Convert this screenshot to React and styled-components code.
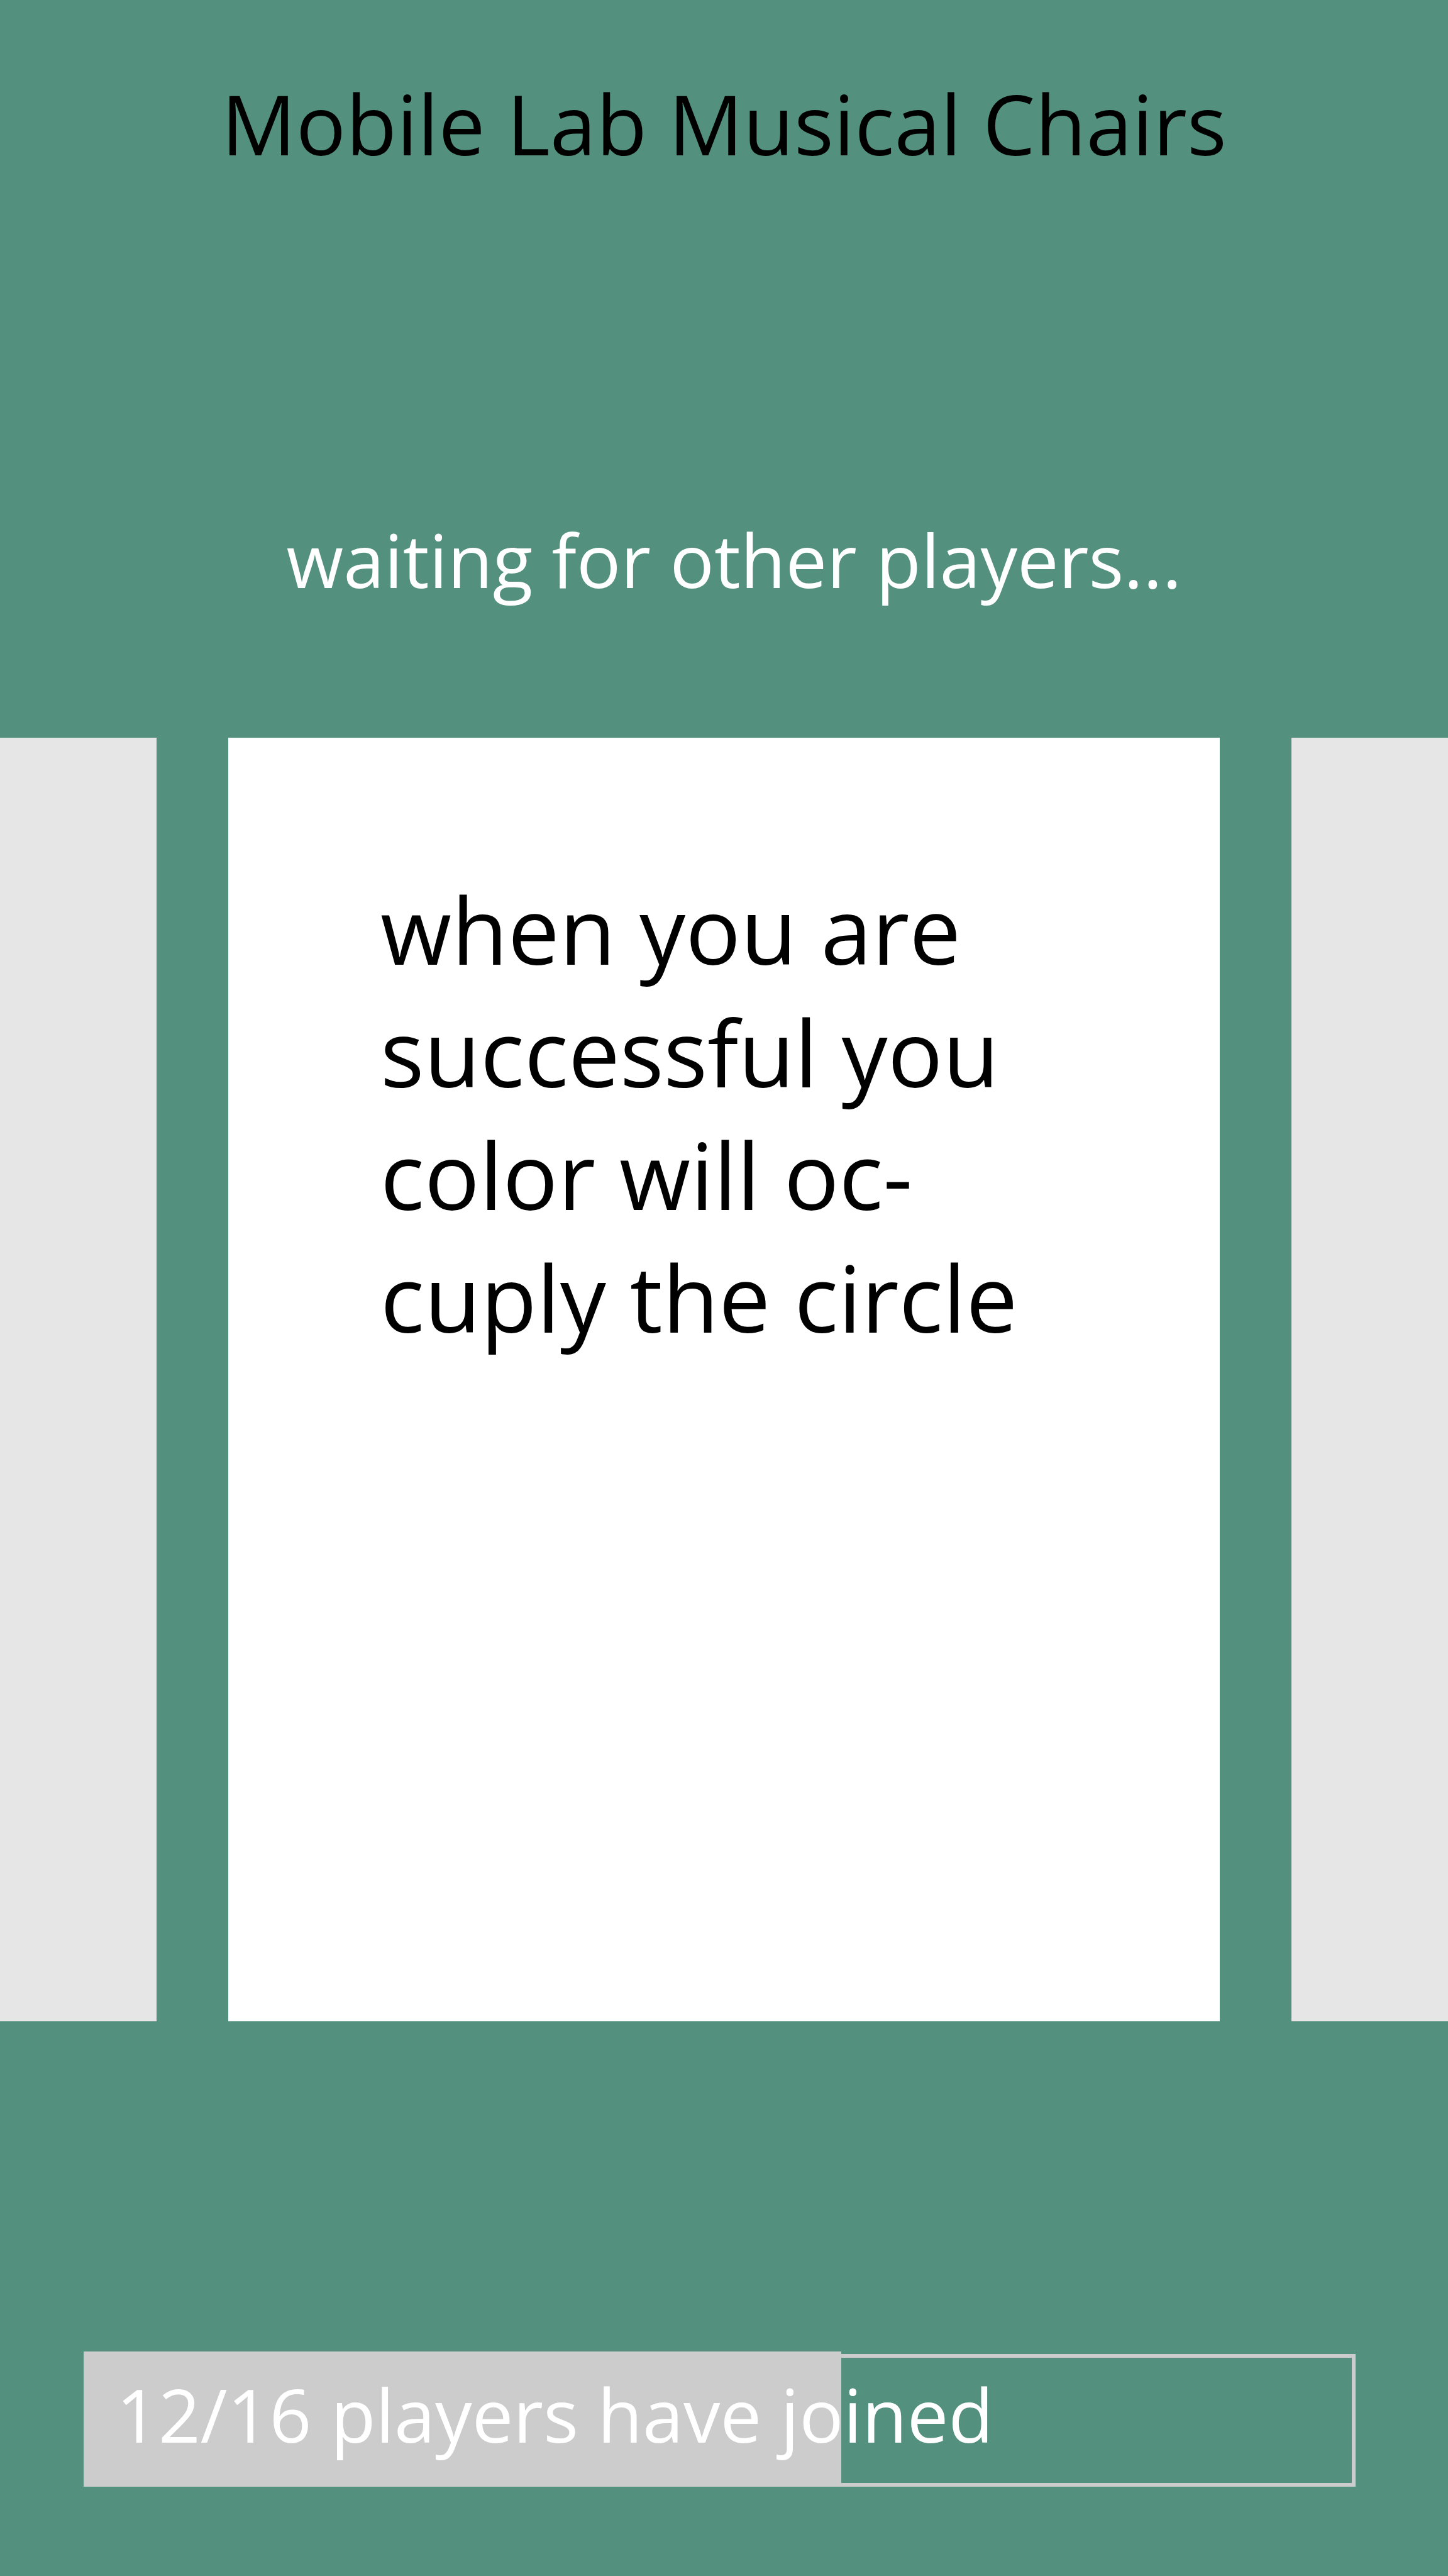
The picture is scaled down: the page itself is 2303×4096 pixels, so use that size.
import React from "react";
import styled, { createGlobalStyle } from "styled-components";

const GlobalStyle = createGlobalStyle`
  * { box-sizing: border-box; }
  body { margin: 0; background: #53917e; font-family: "Open Sans", "Noto Sans", sans-serif; }
`;

const Screen = styled.main`
  min-height: 100vh;
  display: flex;
  flex-direction: column;
  background: #53917e;
`;

const Title = styled.h1`
  margin: 0;
  padding-top: 96px;
  font-size: 132px;
  line-height: 200px;
  font-weight: 400;
  text-align: center;
  color: #000;
`;

const Status = styled.p`
  margin: 0;
  padding: 504px 0 0 32px;
  font-size: 117px;
  line-height: 180px;
  text-align: center;
  color: #fff;
`;

const Carousel = styled.section`
  display: grid;
  grid-template-columns: 249fr 1577fr 249fr;
  gap: 114px;
  margin-top: 193px;
`;

const SideCard = styled.div`
  background: #e6e6e6;
`;

const Card = styled.article`
  min-height: 2041px;
  padding: 207px 0 0 242px;
  background: #fff;
`;

const Instruction = styled.p`
  margin: 0;
  font-size: 146px;
  line-height: 195px;
  color: #000;
  white-space: nowrap;
`;

const Progress = styled.div`
  display: grid;
  grid-template-columns: 1205fr 818fr;
  grid-template-rows: 215px;
  margin: 525px 147px 0 133px;
`;

const Track = styled.div`
  grid-area: 1 / 1 / 2 / 3;
  margin-top: 4px;
  border: 6px solid #ccc;
`;

const Fill = styled.div`
  grid-area: 1 / 1 / 2 / 2;
  background: #ccc;
`;

const Label = styled.span`
  grid-area: 1 / 1 / 2 / 3;
  padding-left: 52px;
  font-size: 117px;
  line-height: 200px;
  color: #fff;
`;

export default function App() {
  return (
    <Screen>
      <GlobalStyle />
      <Title>Mobile Lab Musical Chairs</Title>
      <Status>waiting for other players...</Status>
      <Carousel>
        <SideCard />
        <Card>
          <Instruction>
            when you are<br />successful you<br />color will oc-<br />cuply the circle
          </Instruction>
        </Card>
        <SideCard />
      </Carousel>
      <Progress
        role="progressbar"
        aria-valuemin={0}
        aria-valuemax={16}
        aria-valuenow={12}
        aria-labelledby="joined"
      >
        <Track />
        <Fill />
        <Label id="joined">12/16 players have joined</Label>
      </Progress>
    </Screen>
  );
}
